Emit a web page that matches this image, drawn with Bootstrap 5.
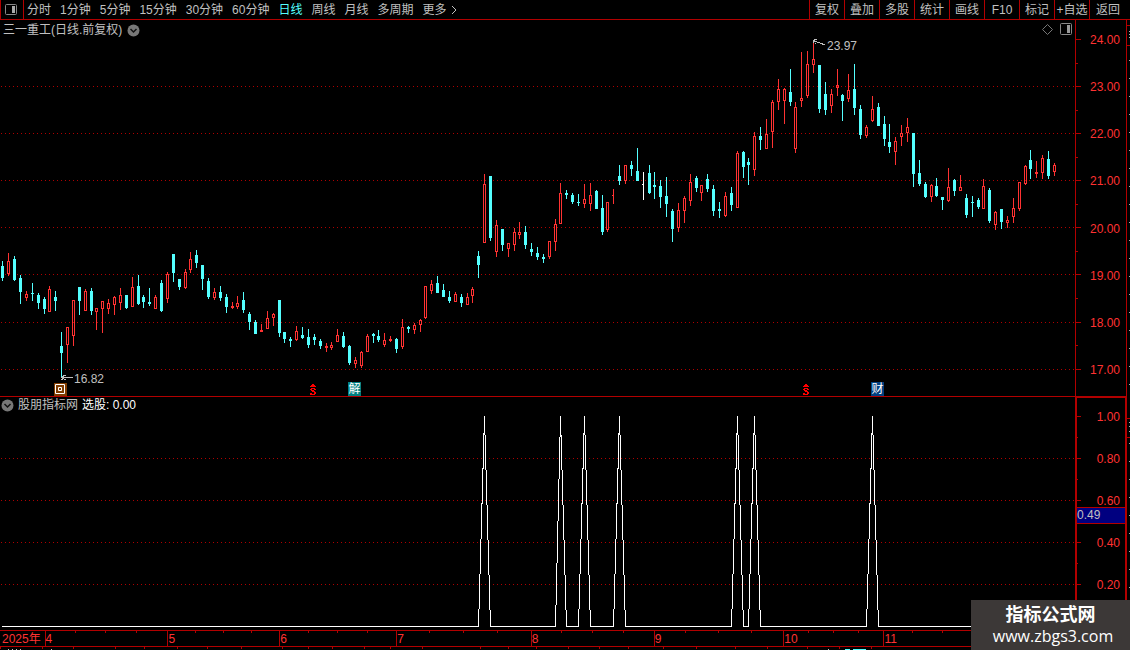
<!DOCTYPE html>
<html lang="zh-CN">
<head>
<meta charset="utf-8">
<meta name="viewport" content="width=device-width, initial-scale=1">
<title>三一重工 日线</title>
<link href="https://cdn.jsdelivr.net/npm/bootstrap@5.3.0/dist/css/bootstrap.min.css" rel="stylesheet">
<style>
  :root { --line: #b20000; --hot: #ff3232; --ice: #54ffff; --soft: #c0c0c0; }
  body { background: #000; color: var(--soft); font: 12px/16px "Liberation Sans", "Noto Sans CJK SC", sans-serif; }
  button { font: inherit; color: inherit; background: none; border: 0; padding: 0; white-space: nowrap; }
  .terminal { display: grid; height: 100vh; grid-template-rows: 20px 376fr 234fr 16px 4px; }
  .topbar { border-bottom: 1px solid var(--line); }
  .panel-toggle { width: 24px; border: solid var(--line); border-width: 0 1px; }
  .periods { gap: 9px; padding-left: 3px; }
  .periods .active { color: var(--ice); }
  .tools button { width: 35px; border-left: 1px solid var(--line); }
  .tools button:last-child { width: 41px; padding-right: 4px; }
  .pane { display: grid; grid-template-columns: 1fr 51px 4px; min-height: 0; }
  .scale { border-left: 1px solid var(--line); color: var(--hot); padding: 12px 6px 18px 0; }
  .edge { border-left: 1px solid var(--line); }
  .study .plot { border-top: 1px solid var(--line); }
  .study .scale { border: 2px solid var(--line); border-bottom: 0; padding: 11px 5px 37px 0; margin-right: -1px; }
  .pane-title { gap: 5px; padding: 2px 3px; z-index: 1; }
  .study .pane-title { gap: 4px; padding: 0 1px; }
  .cursor-value { left: 0; right: 0; top: 47%; color: var(--soft); background: #000080; border: solid var(--line); border-width: 1px 0; line-height: 15px; }
  .tag { bottom: 0; width: 13px; height: 14px; line-height: 14px; color: #fff; text-align: center; }
  .tag-teal { background: #008080; }
  .tag-blue { background: #004080; }
  .corner-tools { right: 3px; top: 3px; gap: 7px; }
  .months { border-top: 1px solid var(--line); color: var(--hot); }
  .month { flex-basis: 0; min-width: 0; border-left: 1px solid var(--line); }
  .month:first-child { border: 0; padding-left: 2px; }
  .weeks { inset: 0 0 auto -1px; height: 2px; }
  .weeks span + span { border-left: 1px solid var(--line); }
  .next-pane { border-top: 1px solid var(--line); }
  .brand { right: 0; bottom: 0; width: 159px; height: 50px; background: #3c3837; color: #fff; }
  .brand strong { font-size: 18px; line-height: 24px; padding-top: 3px; }
  .brand span { font: 16px/18px "Open Sans", "Noto Sans", sans-serif; padding-left: 5px; }
</style>
</head>
<body>
<main class="terminal position-relative overflow-hidden">
  <nav class="topbar d-flex justify-content-between">
    <div class="d-flex">
      <button class="panel-toggle d-flex align-items-center ps-1" aria-label="侧栏">
        <svg width="12" height="11" viewBox="0 0 12 11"><rect x=".5" y=".5" width="11" height="10" rx="1" fill="none" stroke="#888"/><path d="M7 2h3v7H7z" fill="#aaa"/></svg>
      </button>
      <div class="periods d-flex align-items-center">
        <button>分时</button><button>1分钟</button><button>5分钟</button><button>15分钟</button><button>30分钟</button><button>60分钟</button><button class="active">日线</button><button>周线</button><button>月线</button><button>多周期</button>
        <button class="d-flex align-items-center">更多<svg class="ms-1" width="6" height="10" viewBox="0 0 6 10"><path d="M1 1l4 4-4 4" fill="none" stroke="#c0c0c0"/></svg></button>
      </div>
    </div>
    <div class="tools d-flex">
      <button>复权</button><button>叠加</button><button>多股</button><button>统计</button><button>画线</button><button>F10</button><button>标记</button><button>+自选</button><button>返回</button>
    </div>
  </nav>

  <section class="pane">
    <div class="plot position-relative">
      <svg id="price" class="position-absolute w-100 h-100" viewBox="0 20 1075 376" preserveAspectRatio="none" shape-rendering="crispEdges"></svg>
      <div class="pane-title position-relative d-flex align-items-center">
        <span>三一重工(日线.前复权)</span>
        <button class="d-flex" aria-label="展开"><svg width="13" height="13" viewBox="0 0 13 13"><circle cx="6.5" cy="6.5" r="6" fill="#777"/><path d="M3.5 5l3 3 3-3" fill="none" stroke="#111" stroke-width="1.5"/></svg></button>
      </div>
      <div class="corner-tools position-absolute d-flex align-items-center">
        <svg width="11" height="11" viewBox="0 0 11 11"><path d="M5.5 .5l5 5-5 5-5-5z" fill="none" stroke="#777"/></svg>
        <svg width="12" height="12" viewBox="0 0 12 12"><rect x=".5" y=".5" width="11" height="11" rx="1" fill="none" stroke="#888"/><path d="M7 2h3v8H7z" fill="#999"/></svg>
      </div>
      <span class="position-absolute" style="left:76.93%;top:4.8%">23.97</span>
      <span class="position-absolute" style="left:6.88%;top:93.3%">16.82</span>
      <svg class="position-absolute" style="left:5.02%;bottom:0" width="13" height="13" viewBox="0 0 13 13"><path d="M0 0h13v13H0z" fill="#803c00"/><path d="M1.5 1.5h9v9h-9zM4.5 4.5h3v3h-3z" fill="none" stroke="#fff"/></svg>
      <svg class="position-absolute" style="left:28.84%;bottom:1px" width="6" height="11" viewBox="0 0 6 11" shape-rendering="crispEdges"><path d="M2 0h2v1h1v1h1v1H0V2h1V1h1zM1 4h4v1h1v1H4V5H2v1h2v1h1v1h1v2H5v1H0V9h2v1h2V8H2V7H1V6H0V5h1z" fill="#f00"/></svg>
      <span class="tag tag-teal position-absolute" style="left:32.37%">解</span>
      <svg class="position-absolute" style="left:74.7%;bottom:1px" width="6" height="11" viewBox="0 0 6 11" shape-rendering="crispEdges"><path d="M2 0h2v1h1v1h1v1H0V2h1V1h1zM1 4h4v1h1v1H4V5H2v1h2v1h1v1h1v2H5v1H0V9h2v1h2V8H2V7H1V6H0V5h1z" fill="#f00"/></svg>
      <span class="tag tag-blue position-absolute" style="left:81.02%">财</span>
    </div>
    <div class="scale position-relative d-flex flex-column justify-content-between align-items-end">
      <svg id="priceTicks" class="position-absolute start-0 top-0 h-100" width="6" viewBox="0 20 6 376" preserveAspectRatio="none"></svg>
      <span>24.00</span><span>23.00</span><span>22.00</span><span>21.00</span><span>20.00</span><span>19.00</span><span>18.00</span><span>17.00</span>
    </div>
    <div class="edge position-relative"><svg id="edgeTop" class="position-absolute w-100 h-100" viewBox="0 20 3 376" preserveAspectRatio="none"></svg></div>
  </section>

  <section class="pane study">
    <div class="plot position-relative">
      <svg id="signal" class="position-absolute w-100 h-100" viewBox="0 397 1075 233" preserveAspectRatio="none" shape-rendering="crispEdges"></svg>
      <div class="pane-title position-relative d-flex align-items-center">
        <button class="d-flex" aria-label="展开"><svg width="13" height="13" viewBox="0 0 13 13"><circle cx="6.5" cy="6.5" r="6" fill="#777"/><path d="M3.5 5l3 3 3-3" fill="none" stroke="#111" stroke-width="1.5"/></svg></button>
        <span>股朋指标网</span><span class="text-white">选股: 0.00</span>
      </div>
    </div>
    <div class="scale position-relative d-flex flex-column justify-content-between align-items-end">
      <svg id="signalTicks" class="position-absolute start-0 top-0 h-100" width="5" viewBox="0 398 5 232" preserveAspectRatio="none"></svg>
      <span>1.00</span><span>0.80</span><span>0.60</span><span>0.40</span><span>0.20</span>
      <div class="cursor-value position-absolute">0.49</div>
    </div>
    <div class="edge position-relative"><svg id="edgeLow" class="position-absolute w-100 h-100" viewBox="0 396 3 234" preserveAspectRatio="none"></svg></div>
  </section>

  <div id="months" class="months d-flex"></div>
  <div class="next-pane position-relative"><svg id="nextTicks" class="position-absolute w-100 h-100" viewBox="0 647 1130 3" preserveAspectRatio="none" shape-rendering="crispEdges"></svg></div>

  <aside class="brand position-absolute d-flex flex-column align-items-center">
    <strong>指标公式网</strong><span>www.zbgs3.com</span>
  </aside>
</main>

<script src="https://cdn.jsdelivr.net/npm/bootstrap@5.3.0/dist/js/bootstrap.bundle.min.js"></script>
<script>
// Each candle: kind (r rising, c falling, w flat), centre, high, body top, body bottom, low
const candles = `c2,261,266,278,281 r8,253,261,274,276 c14,256,259,280,281 c20,275,278,292,304 r26,291,294,298,301
c32,283,293,294,301 c38,293,295,303,309 c44,297,299,309,314 r49,286,289,312,312 c55,291,297,301,311
c61,332,346,353,378 r67,327,327,345,363 r73,300,300,336,346 c79,287,287,301,315 r85,289,291,311,311
c91,288,291,311,315 r96,308,308,312,330 r102,301,301,309,333 r108,299,303,309,314 r114,296,297,305,315
r120,288,295,303,310 c126,295,295,308,309 r132,277,287,307,307 c138,275,286,304,305 c143,295,297,302,308
c149,288,302,304,306 r155,295,297,309,309 c161,280,283,311,312 r167,272,274,299,303 c173,254,254,273,282
c179,279,279,287,290 r185,269,272,288,289 r190,252,259,270,273 c196,250,255,263,268 c202,265,265,279,290
c208,278,281,297,299 r214,288,292,298,300 c220,286,292,298,301 c226,294,297,307,313 r232,302,306,308,309
r237,296,303,307,309 c243,292,300,310,313 c249,312,314,322,330 c255,320,322,334,334 r261,324,330,332,332
r267,311,318,329,329 r273,313,314,318,326 c279,300,300,333,337 c284,332,332,339,343 c290,337,339,341,347
r296,326,331,340,341 c302,327,335,338,339 c308,329,337,345,348 c314,334,337,340,345 c320,339,341,346,349
r326,343,346,348,352 r331,342,345,348,350 r337,329,335,342,342 c343,332,336,347,348 c349,345,346,363,365
r355,357,360,364,368 r361,351,352,366,368 r367,334,336,352,352 c373,333,334,336,343 c378,330,336,340,342
r384,333,340,345,347 r390,336,339,341,342 c396,338,339,349,353 r402,319,327,347,349 c408,326,327,329,333
r414,323,325,330,334 r420,319,320,325,332 r425,286,286,318,319 r431,280,284,291,294 c437,276,283,293,293
c443,284,290,297,297 c449,291,297,301,303 r455,292,294,302,302 c461,294,297,303,307 r467,293,297,305,305
r472,287,289,296,303 c478,251,256,265,278 r484,174,184,243,243 c490,176,176,238,241 r496,220,225,252,257
c502,229,229,245,251 r508,243,243,249,257 r514,228,232,245,251 r519,222,232,235,239 c525,226,232,245,249
c531,243,249,252,256 c537,247,253,257,260 c543,254,257,259,263 r549,241,241,257,259 r555,219,224,242,251
r560,183,193,224,224 c566,190,193,195,199 c572,193,195,202,204 c578,194,202,203,206 r584,184,199,204,208
r590,183,195,204,211 c596,190,191,209,209 c602,195,208,232,235 r607,202,202,230,232 r613,189,195,196,204
c619,165,176,181,185 r625,165,165,181,184 c631,161,165,169,176 c637,148,171,181,181 w643,172,184,185,200
c649,165,173,193,194 c654,172,185,187,199 c660,180,186,197,208 c666,177,196,204,217 c672,209,211,229,242
r678,203,210,228,232 r684,196,198,211,223 r690,174,182,201,206 c696,176,178,188,192 r701,185,185,193,201
c707,174,179,189,192 c713,185,189,211,216 c719,202,209,211,218 r725,192,196,216,217 c731,187,193,205,211
r737,151,153,208,208 c743,151,152,167,178 c748,158,162,165,185 r754,132,136,170,176 c760,127,136,140,150
r766,119,134,149,149 r772,100,102,132,148 r778,79,89,102,110 r784,88,89,101,124 c790,69,92,102,106
r795,102,107,149,153 r801,52,98,101,107 r807,51,64,96,98 r813,43,59,65,73 c819,65,65,109,113
c825,82,94,110,115 r831,89,94,106,113 r837,69,85,88,96 c842,94,95,101,121 r848,74,90,99,102
c854,64,89,108,115 c860,105,109,135,139 r866,125,127,136,138 r872,96,109,121,122 c878,103,107,126,126
c884,116,124,139,146 c889,124,142,147,153 r895,137,141,152,165 r901,125,133,137,146 r907,118,127,133,142
c913,133,133,174,187 c919,160,173,184,186 c925,182,184,197,198 r931,184,185,197,202 c936,178,186,196,197
c942,197,197,200,210 r948,168,187,201,202 c954,179,180,191,196 r960,175,187,191,191 c966,194,198,215,218
c972,196,202,203,217 c978,198,200,207,209 r983,179,186,209,209 c989,188,190,221,223 r995,211,212,225,230
c1001,209,209,222,229 r1007,216,220,223,228 r1013,198,208,217,223 r1019,182,182,209,211 r1025,165,166,184,185
c1030,150,160,169,179 r1036,161,172,174,178 r1042,155,158,173,179 c1048,151,159,176,179 r1054,163,165,172,176`.split(/\s+/);

const box = (x, y, w, h) => `M${x} ${y}h${w}v${h}h${-w}z`;
const ink = { r: '', c: '', w: '' };
for (const item of candles) {
  const kind = item[0];
  const [x, high, top, bottom, low] = item.slice(1).split(',').map(Number);
  ink[kind] += box(x, high, 1, top - high) + box(x, bottom, 1, low - bottom);
  if (kind === 'c') ink.c += box(x - 1, top, 3, bottom - top);
  else if (bottom - top < 2) ink[kind] += box(x - 1, top, 2, 1);
  else ink.r += box(x - 1, top, 3, 1) + box(x - 1, bottom - 1, 3, 1) + box(x - 1, top + 1, 1, bottom - top - 2) + box(x + 1, top + 1, 1, bottom - top - 2);
}
const dots = ys => ys.map(y => `<path d="M1 ${y}.5H1075" stroke="#b00000" stroke-dasharray="1 3"/>`).join('');
const put = (id, html) => { document.getElementById(id).innerHTML = html; };

put('price', dots([86, 133, 180, 227, 274, 322, 369]) +
  `<path fill="#ff3232" d="${ink.r}"/><path fill="#54ffff" d="${ink.c}"/><path fill="#fff" d="${ink.w}"/>` +
  '<path d="M813.5 43v-3M814 39.5h3M813 40.5h2M814 41.5h3M817 42.5h3M820 43.5h3M822 44.5h3M815 43.5h1M61 377.5h12M62 376.5h2M63 375.5h3M62 378.5h2M61 379.5h2M64 379.5h2" stroke="#c0c0c0"/>');

const peaks = [[478, 484, 490], [555, 560, 566], [578, 584, 590], [613, 619, 625], [731, 737, 743], [748, 754, 760], [866, 872, 878]];
put('signal', dots([458, 500, 542, 584]) +
  `<path fill="none" stroke="#fff" d="M2 626.5${peaks.map(([a, b, c]) => `H${a}.5L${b}.5 416.5L${c}.5 626.5`).join('')}H1060"/>`);

const ticks = (major, minor, a, b) => `<path fill="#b20000" d="${major.map(y => box(0, y, a, 1)).join('')}${minor.map(y => box(0, y, b, 1)).join('')}"/>`;
put('priceTicks', ticks([39, 86, 133, 180, 227, 274, 322, 369], [63, 110, 157, 204, 251, 298, 345], 5, 2));
put('signalTicks', ticks([416, 458, 500, 542, 584], [437, 479, 521, 563, 605], 4, 1));
const range = (a, b, s) => Array.from({ length: Math.floor((b - a) / s) + 1 }, (_, i) => a + i * s);
const edge = (lines, marks) => `<path fill="#b20000" d="${lines.map(y => box(0, y, 3, 1)).join('')}"/><path fill="#aaa" d="${marks.map(y => box(2, y, 1, 1)).join('')}"/>`;
put('edgeTop', edge([25, 45], [31, 34, 37, ...range(60, 386, 18)]));
put('edgeLow', edge([418, 437], [422, 426, 431, ...range(443, 600, 18)]));

const months = [['2025年', 43], ['4', 123], ['5', 112], ['6', 117], ['7', 135], ['8', 123], ['9', 130], ['10', 100], ['11', 118], ['', 129]];
put('months', months.map(([name, size], i) => `<div class="month position-relative text-nowrap" style="flex-grow:${size}">${name}` +
  (i ? `<div class="weeks position-absolute d-flex">${'<span class="flex-fill"></span>'.repeat(4)}</div>` : '') + '</div>').join(''));

put('nextTicks', `<path fill="#b20000" d="${[0, 42, 73, 115, 144, 177, 207, 241, 282, 308, 332, 364, 390, 422, 480, 508, 536, 568, 599, 628, 663, 696, 735, 767, 807, 839, 871].map(x => box(x, 647, 1, 2)).join('')}"/>` +
  `<path fill="#c0c0c0" d="${[8, 12, 16, 20, 51, 828].map(x => box(x, 649, 1, 1)).join('')}"/><path fill="#54ffff" d="M845 649h5v1h-5zM853 649h13v1h-13z"/>`);
</script>
</body>
</html>
